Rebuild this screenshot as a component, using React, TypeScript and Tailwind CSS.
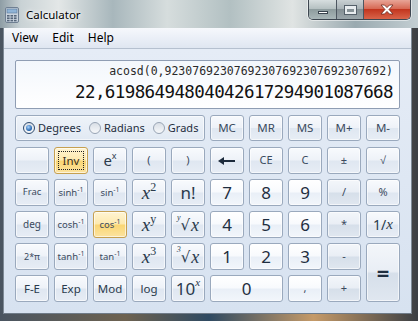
import React from "react";

const SANS = "font-['Noto_Sans',sans-serif]";
const MONO = "font-['DejaVu_Sans_Mono',monospace]";
const SERIF = "font-['Liberation_Serif',serif]";

type Variant = "norm" | "digit" | "op" | "hl";

const variantCls: Record<Variant, string> = {
  norm: "border-[#9aa9bd] bg-[linear-gradient(180deg,#f8fafd_0%,#eef2f8_48%,#dfe7f1_52%,#e7edf5_100%)]",
  digit: "border-[#9aa9bd] bg-[linear-gradient(180deg,#ffffff_0%,#f8fafd_48%,#e9eff7_52%,#f2f6fb_100%)]",
  op: "border-[#9aa9bd] bg-[linear-gradient(180deg,#f3f6fa_0%,#e9eef5_48%,#d6dfea_52%,#e0e7f0_100%)]",
  hl: "border-[#c6a050] bg-[linear-gradient(180deg,#fff4d2_0%,#fde9ae_48%,#fad673_52%,#fce3a0_100%)]",
};

function Btn({
  children,
  v = "norm",
  className = "",
  focus = false,
}: {
  children?: React.ReactNode;
  v?: Variant;
  className?: string;
  focus?: boolean;
}) {
  return (
    <div
      className={`relative flex items-center justify-center rounded-[3px] border text-[#1f2e40] shadow-[inset_0_0_0_1px_rgba(255,255,255,0.6)] ${variantCls[v]} ${className}`}
    >
      {focus && <span className="absolute inset-[3px] border border-dotted border-[#222]" />}
      {children}
    </div>
  );
}

function Inv1({ base }: { base: string }) {
  return (
    <span className={`${SANS} text-[9.5px] leading-none text-[#3a4a5e]`}>
      {base}
      <span className="relative top-[-4px] text-[7px]">-1</span>
    </span>
  );
}

function XPow({ p }: { p: string }) {
  return (
    <span className={`${SERIF} italic text-[19px] leading-none text-[#2a3a4c]`}>
      x<span className="relative top-[-8px] text-[12px] not-italic">{p}</span>
    </span>
  );
}

function Root({ idx }: { idx: string }) {
  return (
    <span className={`${SERIF} flex items-start text-[18px] leading-none text-[#2a3a4c]`}>
      <span className="relative top-[-2px] text-[8px] italic leading-none">{idx}</span>
      <span className="font-['DejaVu_Sans',sans-serif] text-[15px] leading-[18px]">√</span>
      <span className="ml-[1px] italic leading-[18px]">x</span>
    </span>
  );
}

function Radio({ on, label }: { on?: boolean; label: string }) {
  return (
    <div className="flex items-center gap-[3px]">
      <span
        className={`relative flex h-[12px] w-[12px] items-center justify-center rounded-full border ${
          on ? "border-[#2d4a6e]" : "border-[#98a4b4]"
        } bg-[linear-gradient(180deg,#d9dfe6,#f6f8fa)]`}
      >
        {on && (
          <span className="h-[6px] w-[6px] rounded-full bg-[radial-gradient(circle_at_40%_35%,#a9d4ff,#1d5ea8_70%)]" />
        )}
      </span>
      <span className={`${SANS} text-[11px] text-[#1f2e40]`}>{label}</span>
    </div>
  );
}

function CalcIcon() {
  return (
    <svg width="14" height="16" viewBox="0 0 14 16">
      <rect x="0.5" y="0.5" width="13" height="15" rx="1.5" fill="#c9d3de" stroke="#6f7f92" />
      <rect x="2" y="2" width="10" height="4" fill="#8fb3d6" stroke="#5b7896" strokeWidth="0.6" />
      {[0, 1, 2].map((r) =>
        [0, 1, 2].map((c) => (
          <rect key={`${r}-${c}`} x={2 + c * 3.5} y={8 + r * 2.4} width="2.6" height="1.6" fill="#56667a" />
        ))
      )}
    </svg>
  );
}

export default function App() {
  const g = "grid grid-cols-[repeat(10,34px)] gap-[5px]";
  const mTxt = `${SANS} text-[11.5px]`;
  const small = `${SANS} text-[11px] text-[#3a4a5e]`;
  const dig = `${SANS} text-[17px] text-[#1c2a3b]`;
  const mid = `${SANS} text-[11.5px] text-[#2a3a4c]`;
  return (
    <div className="flex h-[321px] w-[418px] flex-col overflow-hidden bg-[linear-gradient(90deg,#4a5561_0%,#6d6250_30%,#2f4a62_50%,#c59a68_75%,#3b3f44_100%)]">
      {/* Title bar */}
      <div className="flex h-[28px] shrink-0 items-start bg-[linear-gradient(90deg,#8e9da5_0%,#c9d2d5_5%,#e3e7e7_14%,#a8b7bc_27%,#d6dddd_40%,#b2c0c2_55%,#e0e4e3_70%,#9aaab0_85%,#c3ced2_100%)]">
        <div className="ml-[5px] mt-[7px]">
          <CalcIcon />
        </div>
        <div className={`${SANS} ml-[7px] mt-[6px] text-[11.5px] text-black [text-shadow:0_0_6px_#fff,0_0_3px_#fff]`}>
          Calculator
        </div>
        <div className="flex-1" />
        <div className="mr-[7px] flex h-[20px] overflow-hidden rounded-b-[5px] border border-t-0 border-[#3d4650] shadow-[0_0_0_1px_rgba(255,255,255,0.5)]">
          <div className="flex w-[28px] items-end justify-center border-r border-[#4d5660] bg-[linear-gradient(180deg,#d7dedf_0%,#b6c1c2_45%,#8e9c9e_50%,#a9b6b8_100%)] pb-[5px]">
            <span className="h-[3px] w-[10px] border border-[#3a444e] bg-white" />
          </div>
          <div className="flex w-[27px] items-center justify-center border-r border-[#4d5660] bg-[linear-gradient(180deg,#c9d0d3_0%,#a9b3b7_45%,#848f94_50%,#9aa5aa_100%)]">
            <span className="h-[8px] w-[11px] border-2 border-t-[3px] border-[#e8ecef] outline outline-1 outline-[#55606a]" />
          </div>
          <div className="flex w-[46px] items-center justify-center bg-[linear-gradient(180deg,#e8a597_0%,#d76a55_45%,#c2361f_50%,#d9644a_100%)]">
            <svg width="14" height="11" viewBox="0 0 14 11">
              <path
                d="M1 1 L4.5 1 L7 3.6 L9.5 1 L13 1 L9 5.5 L13 10 L9.5 10 L7 7.4 L4.5 10 L1 10 L5 5.5 Z"
                fill="#fff"
                stroke="#6b2a20"
                strokeWidth="0.8"
              />
            </svg>
          </div>
        </div>
      </div>

      {/* Client */}
      <div className="ml-[3px] mr-[6px] flex h-[286px] shrink-0 flex-col border-x border-[#7d8995]">
        {/* Menu */}
        <div className={`${SANS} flex h-[21px] items-center gap-[14px] border-b border-[#b5c0cf] bg-[linear-gradient(180deg,#f6f8fc,#dfe6f1)] pl-[8px] text-[12px] text-black`}>
          <span>View</span>
          <span>Edit</span>
          <span>Help</span>
        </div>

        {/* Body */}
        <div className="flex flex-1 flex-col bg-[linear-gradient(180deg,#e5ecf6_0%,#d7e2f0_100%)] px-[11px] pt-[11px]">
          {/* Display */}
          <div className="flex h-[49px] flex-col items-end rounded-[2px] border border-[#8f9db3] bg-[linear-gradient(180deg,#f3f7fc,#ffffff)] pr-[6px]">
            <div className={`${MONO} mt-[3px] text-[11.5px] leading-[14px] text-[#2a2a2a]`}>
              acosd(0,92307692307692307692307692307692)
            </div>
            <div className={`${MONO} mt-[4px] text-[17.5px] leading-[20px] tracking-[-0.6px] text-[#111]`}>
              22,61986494804042617294901087668
            </div>
          </div>

          {/* Radio + memory row */}
          <div className={`${g} mt-[6px] h-[26px]`}>
            <div className="col-span-5 flex items-center gap-[8px] rounded-[3px] border border-[#9aa9bd] bg-[linear-gradient(180deg,#eef3f9,#e1e9f3)] pl-[7px] shadow-[inset_0_0_0_1px_rgba(255,255,255,0.6)]">
              <Radio on label="Degrees" />
              <Radio label="Radians" />
              <Radio label="Grads" />
            </div>
            {["MC", "MR", "MS", "M+", "M-"].map((m) => (
              <Btn key={m} className={`${mTxt} text-[#3a4a5e]`}>
                {m}
              </Btn>
            ))}
          </div>

          {/* Keypad */}
          <div className={`${g} mt-[6px] grid-rows-[repeat(5,27px)]`}>
            {/* Row 1 */}
            <Btn />
            <Btn v="hl" focus className={`${SANS} text-[11.5px] text-[#3a3020]`}>
              Inv
            </Btn>
            <Btn className={`${SANS} text-[15px] leading-none text-[#2a3a4c]`}>
              e<span className="relative top-[-5px] text-[9px]">x</span>
            </Btn>
            <Btn className={small}>(</Btn>
            <Btn className={small}>)</Btn>
            <Btn>
              <svg width="20" height="10" viewBox="0 0 20 10">
                <path d="M1 5 L7 1 L7 4 L18 4 L18 6 L7 6 L7 9 Z" fill="#1c2a3b" />
              </svg>
            </Btn>
            <Btn className={small}>CE</Btn>
            <Btn className={small}>C</Btn>
            <Btn className={small}>±</Btn>
            <Btn className={small}>√</Btn>

            {/* Row 2 */}
            <Btn className={`${SANS} text-[9.5px] text-[#3a4a5e]`}>Frac</Btn>
            <Btn>
              <Inv1 base="sinh" />
            </Btn>
            <Btn>
              <Inv1 base="sin" />
            </Btn>
            <Btn>
              <XPow p="2" />
            </Btn>
            <Btn className={`${SANS} text-[17px] text-[#2a3a4c]`}>n!</Btn>
            <Btn v="digit" className={dig}>7</Btn>
            <Btn v="digit" className={dig}>8</Btn>
            <Btn v="digit" className={dig}>9</Btn>
            <Btn v="op" className={small}>/</Btn>
            <Btn className={small}>%</Btn>

            {/* Row 3 */}
            <Btn className={`${SANS} text-[10px] text-[#3a4a5e]`}>deg</Btn>
            <Btn>
              <Inv1 base="cosh" />
            </Btn>
            <Btn v="hl">
              <Inv1 base="cos" />
            </Btn>
            <Btn>
              <XPow p="y" />
            </Btn>
            <Btn>
              <Root idx="y" />
            </Btn>
            <Btn v="digit" className={dig}>4</Btn>
            <Btn v="digit" className={dig}>5</Btn>
            <Btn v="digit" className={dig}>6</Btn>
            <Btn v="op" className={small}>*</Btn>
            <Btn className={`${SANS} text-[14px] text-[#2a3a4c]`}>
              1/<span className={`${SERIF} italic text-[15px]`}>x</span>
            </Btn>

            {/* Row 4 */}
            <Btn className={`${SANS} text-[9px] text-[#3a4a5e]`}>2*π</Btn>
            <Btn>
              <Inv1 base="tanh" />
            </Btn>
            <Btn>
              <Inv1 base="tan" />
            </Btn>
            <Btn>
              <XPow p="3" />
            </Btn>
            <Btn>
              <Root idx="3" />
            </Btn>
            <Btn v="digit" className={dig}>1</Btn>
            <Btn v="digit" className={dig}>2</Btn>
            <Btn v="digit" className={dig}>3</Btn>
            <Btn v="op" className={small}>-</Btn>
            <Btn v="op" className={`row-span-2 ${SANS} text-[22px] font-bold text-[#1c2a3b]`}>=</Btn>

            {/* Row 5 */}
            <Btn className={mid}>F-E</Btn>
            <Btn className={mid}>Exp</Btn>
            <Btn className={mid}>Mod</Btn>
            <Btn className={mid}>log</Btn>
            <Btn className={`${SANS} text-[17px] leading-none text-[#2a3a4c]`}>
              10<span className={`${SERIF} relative top-[-6px] text-[11px] italic`}>x</span>
            </Btn>
            <Btn v="digit" className={`col-span-2 ${dig}`}>0</Btn>
            <Btn v="digit" className={small}>,</Btn>
            <Btn v="op" className={small}>+</Btn>
          </div>
        </div>
        <div className="h-px bg-[#6f7b88]" />
      </div>
    </div>
  );
}
